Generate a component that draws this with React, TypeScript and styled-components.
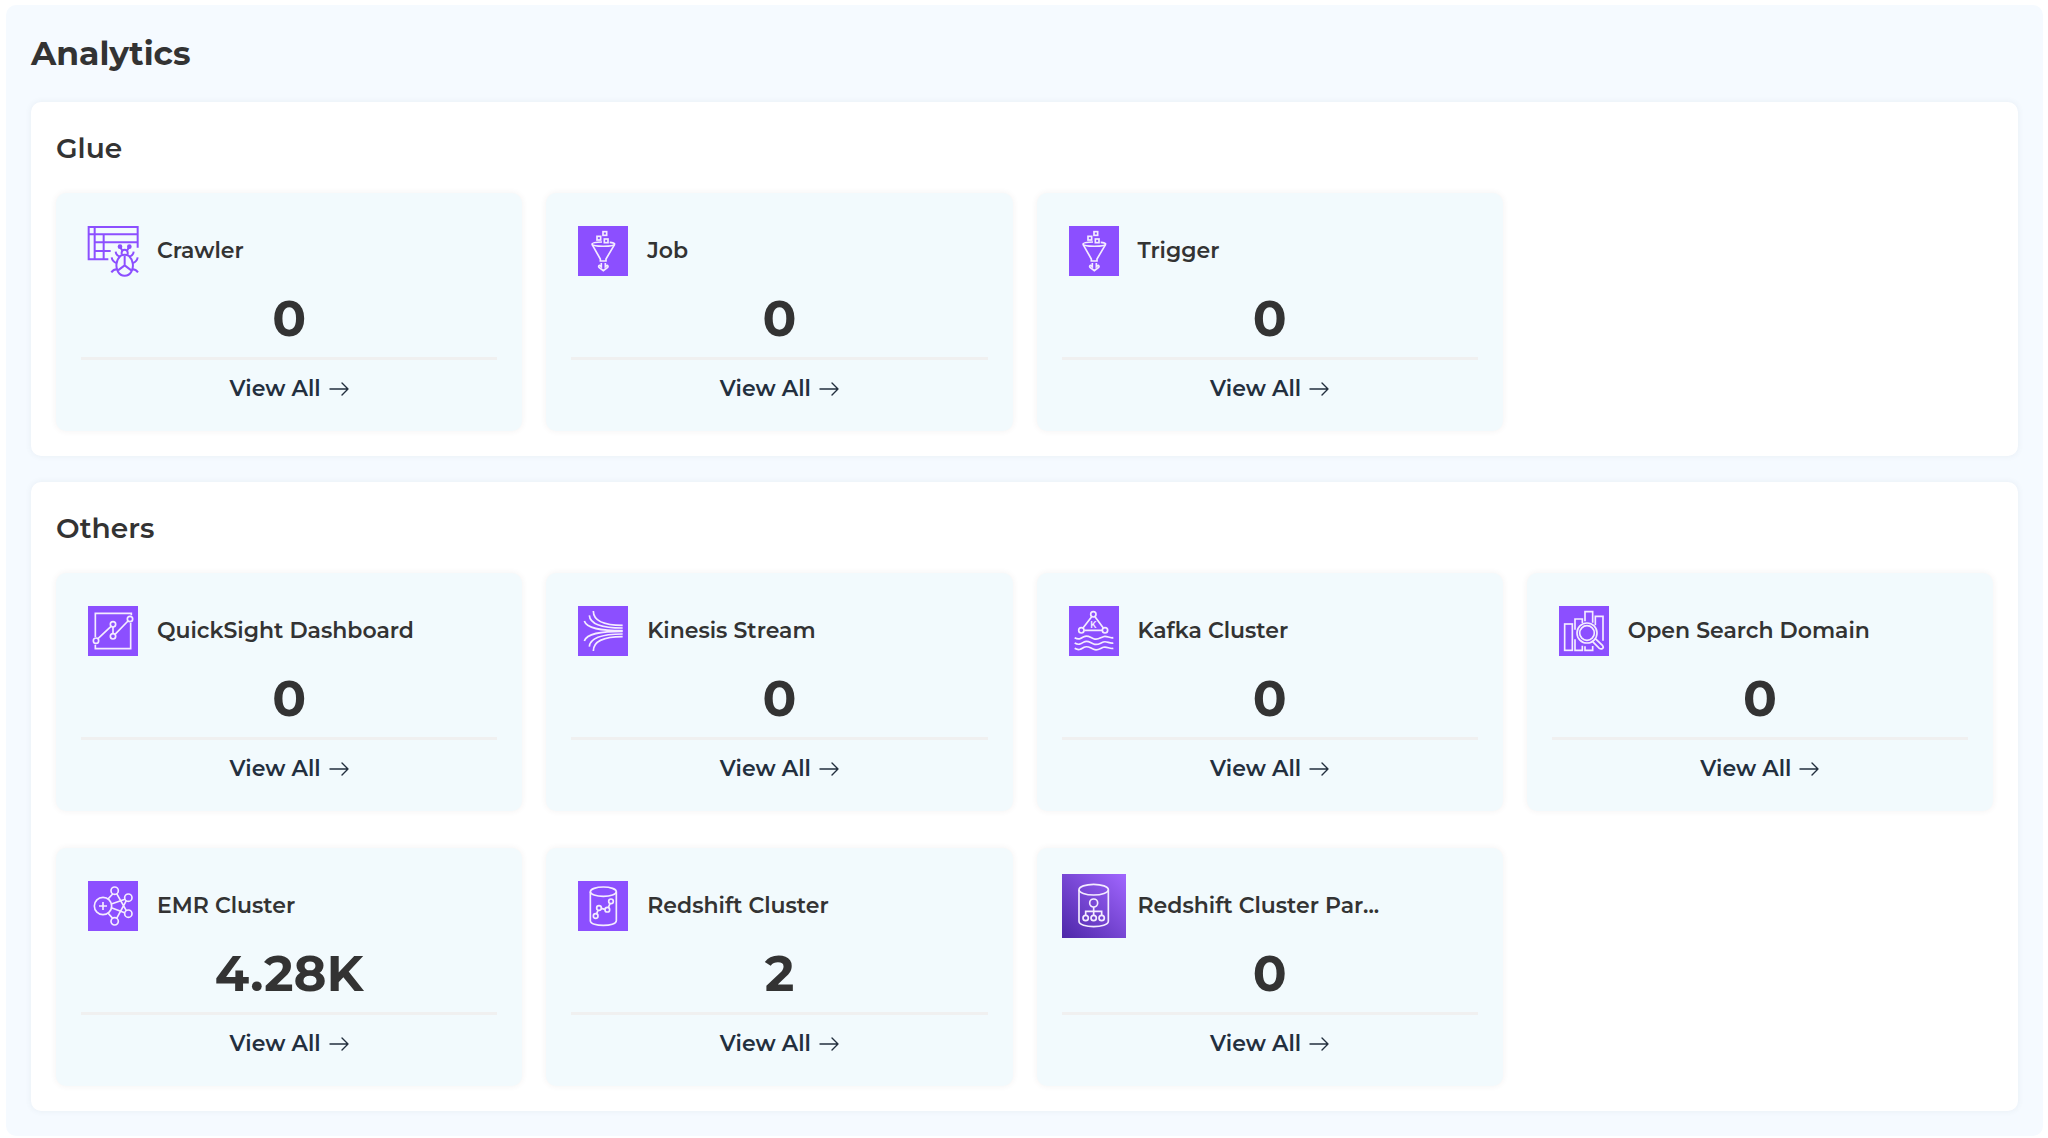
import React from "react";
import styled, { createGlobalStyle } from "styled-components";

const GlobalStyle = createGlobalStyle`
  *, *::before, *::after { box-sizing: border-box; }
  body {
    margin: 0;
    background: #ffffff;
    color: #333333;
    font-family: Montserrat, Inter, "Open Sans", sans-serif;
  }
`;

const Page = styled.main`
  margin: 5px 5px 0 6px;
  padding: 25px;
  border-radius: 10px;
  background: #f5faff;
`;

const PageTitle = styled.h1`
  margin: 0 0 26px;
  font-size: 33px;
  line-height: 46px;
  font-weight: 700;
`;

const Sections = styled.div`
  display: flex;
  flex-direction: column;
  gap: 26px;
`;

const Section = styled.section`
  padding: 25px;
  border-radius: 10px;
  background: #ffffff;
  box-shadow: 0 0 6px rgba(60, 90, 120, 0.08);
`;

const SectionTitle = styled.h2`
  margin: 0 0 24px;
  font-size: 28px;
  line-height: 42px;
  font-weight: 600;
`;

const CardGrid = styled.div`
  display: grid;
  grid-template-columns: repeat(4, minmax(0, 1fr));
  gap: 37px 24px;
`;

const Card = styled.article`
  padding: 26px 25px 13px;
  border-radius: 10px;
  background: #f2fafd;
  box-shadow: 0 0 6px rgba(90, 60, 60, 0.07);
`;

const CardHeader = styled.header`
  display: flex;
  align-items: center;
  gap: 12px;
`;

const CardIcon = styled.svg`
  flex: none;
  width: 64px;
  height: 64px;
  fill: none;
  stroke-width: 5;
`;

const CardTitle = styled.h3`
  margin: 0;
  min-width: 0;
  font-size: 22px;
  line-height: 32px;
  font-weight: 600;
  white-space: nowrap;
`;

const CardValue = styled.p`
  margin: 0;
  padding-bottom: 2px;
  border-bottom: 3px solid #f0f0f0;
  font-size: 50px;
  line-height: 72px;
  font-weight: 700;
  text-align: center;
`;

const CardFooter = styled.footer`
  display: flex;
  justify-content: center;
`;

const ViewAll = styled.a`
  display: flex;
  align-items: center;
  gap: 8px;
  color: #232f3e;
  font-size: 22px;
  line-height: 58px;
  font-weight: 600;
  text-decoration: none;
`;

const Arrow = styled.svg`
  width: 20px;
  height: 14px;
  fill: none;
  stroke: currentColor;
  stroke-width: 1.4;
  stroke-linecap: round;
  stroke-linejoin: round;
`;

/* Service icons share a 150-unit tile with a 21-unit margin around it. */
function Tile({ children }: { children: React.ReactNode }) {
  return (
    <CardIcon viewBox="-21 -21 192 192" stroke="#f4ecff" aria-hidden="true">
      <rect x="0" y="0" width="150" height="150" fill="#8c4fff" stroke="none" />
      {children}
    </CardIcon>
  );
}

const CrawlerIcon = () => (
  <CardIcon viewBox="-21 -21 192 192" stroke="#8c4fff" aria-hidden="true">
    <g strokeWidth="6">
      <path d="M149 65V3H2V100H61" />
      <path d="M2 25H149M20 49H149M20 75H68M20 3V100M47 25V100" />
      <path d="M97 90C84 102 82 124 90 137C99 153 121 153 130 137C138 124 136 102 123 90Q110 82 97 90Z" />
      <path d="M110 89V118M110 118L90 133M110 118L130 133" />
      <path d="M101 86V79Q102 71 110 71Q118 71 119 79V86" />
      <path d="M103 74L97 64M117 74L123 64" />
      <path d="M95 92Q84 88 83 77M125 92Q136 88 137 77M86 111Q73 107 71 94M134 111Q147 107 149 94M89 130Q77 129 70 139M131 130Q143 129 150 139" />
    </g>
    <circle cx="96" cy="62" r="7" fill="#8c4fff" stroke="none" />
    <circle cx="124" cy="62" r="7" fill="#8c4fff" stroke="none" />
  </CardIcon>
);

const GlueIcon = () => (
  <Tile>
    <rect x="75" y="17" width="11" height="11" />
    <rect x="57" y="31" width="11" height="11" />
    <rect x="79" y="39" width="11" height="11" />
    <path d="M72 48Q43 49 42 54C42 63 110 63 110 54Q109 50 95 49" />
    <path d="M42 55L67 99V105H84V99L110 55" />
    <path d="M70 111V122L65 118Q60 120 63 124L76 134L89 124Q92 120 87 118L82 122V111" />
  </Tile>
);

const QuickSightIcon = () => (
  <Tile>
    <path d="M22 93V22H130V28M22 116V128H128V50" />
    <path d="M30 98L69 61M75 63V83M81 85L120 45" />
    <circle cx="24" cy="104" r="8" />
    <circle cx="75" cy="55" r="8" />
    <circle cx="75" cy="91" r="8" />
    <circle cx="126" cy="39" r="8" />
  </Tile>
);

const KinesisIcon = () => (
  <Tile>
    <path d="M46 15C46 44 72 58 134 58M34 28C36 54 68 66 134 66M19 45C26 67 66 74 134 74" />
    <path d="M46 135C46 106 72 92 134 92M34 122C36 96 68 84 134 84M19 105C26 83 66 76 134 76" />
  </Tile>
);

const KafkaIcon = () => (
  <Tile>
    <circle cx="73" cy="25" r="8" />
    <circle cx="37" cy="73" r="8" />
    <circle cx="108" cy="73" r="8" />
    <path d="M68 32L42 66M78 32L103 66M46 73H99" />
    <text
      x="73"
      y="67"
      fill="#f4ecff"
      stroke="none"
      fontFamily="Inter, sans-serif"
      fontSize="27"
      fontWeight="600"
      textAnchor="middle"
    >
      K
    </text>
    {[95, 111, 127].map((y) => (
      <path
        key={y}
        d={`M17 ${y}C29 ${y + 7} 35 ${y + 3} 45 ${y - 3}S62 ${y - 2} 74 ${y + 3}S92 ${y + 1} 103 ${y - 3}S121 ${y + 3} 133 ${y}`}
      />
    ))}
  </Tile>
);

const OpenSearchIcon = () => (
  <Tile>
    <rect x="17" y="54" width="23" height="79" />
    <path d="M48 71V39H70V51M48 100V133H70V119" />
    <path d="M78 46V17H101V50M78 121V133H101V120" />
    <path d="M109 58V31H132V104" />
    <circle cx="84" cy="81" r="30" />
    <circle cx="84" cy="81" r="22" />
    <path d="M109 98L131 119Q135 124 130 128Q125 130 121 127L101 107" />
  </Tile>
);

const EmrIcon = () => (
  <Tile>
    <circle cx="45" cy="75" r="26" />
    <path d="M45 63V87M33 75H57" />
    <circle cx="80" cy="29" r="11" />
    <circle cx="121" cy="50" r="11" />
    <circle cx="121" cy="98" r="11" />
    <circle cx="80" cy="121" r="11" />
    <path d="M60 54L74 39M70 69L111 55M70 80L110 95M60 96L74 112" />
    <path d="M86 38L115 89M86 112L115 59" />
  </Tile>
);

const RedshiftIcon = () => (
  <Tile>
    <ellipse cx="76" cy="32" rx="39" ry="14" />
    <path d="M37 32V119C37 138 115 138 115 119V32" />
    <path d="M56 98L60 88M70 82L81 85M91 80L96 68" />
    <circle cx="53" cy="105" r="7" />
    <circle cx="63" cy="81" r="7" />
    <circle cx="88" cy="86" r="7" />
    <circle cx="99" cy="61" r="7" />
  </Tile>
);

const ParameterIcon = () => (
  <CardIcon viewBox="0 0 192 192" stroke="#f4ecff" aria-hidden="true">
    <defs>
      <linearGradient id="parameter-fill" x1="0" y1="1" x2="1" y2="0">
        <stop offset="0" stopColor="#4d27a8" />
        <stop offset="1" stopColor="#a166ff" />
      </linearGradient>
    </defs>
    <rect width="192" height="192" fill="url(#parameter-fill)" stroke="none" />
    <ellipse cx="95" cy="47" rx="44" ry="16" />
    <path d="M51 47V142C51 163 139 163 139 142V47" />
    <circle cx="95" cy="87" r="12" />
    <path d="M95 99V124M71 124V112H119V124" />
    <circle cx="71" cy="132" r="8" />
    <circle cx="95" cy="132" r="8" />
    <circle cx="119" cy="132" r="8" />
  </CardIcon>
);

type Service = { name: string; count: string; Icon: React.ComponentType };

const groups: { title: string; services: Service[] }[] = [
  {
    title: "Glue",
    services: [
      { name: "Crawler", count: "0", Icon: CrawlerIcon },
      { name: "Job", count: "0", Icon: GlueIcon },
      { name: "Trigger", count: "0", Icon: GlueIcon },
    ],
  },
  {
    title: "Others",
    services: [
      { name: "QuickSight Dashboard", count: "0", Icon: QuickSightIcon },
      { name: "Kinesis Stream", count: "0", Icon: KinesisIcon },
      { name: "Kafka Cluster", count: "0", Icon: KafkaIcon },
      { name: "Open Search Domain", count: "0", Icon: OpenSearchIcon },
      { name: "EMR Cluster", count: "4.28K", Icon: EmrIcon },
      { name: "Redshift Cluster", count: "2", Icon: RedshiftIcon },
      { name: "Redshift Cluster Par...", count: "0", Icon: ParameterIcon },
    ],
  },
];

function ServiceCard({ name, count, Icon }: Service) {
  return (
    <Card>
      <CardHeader>
        <Icon />
        <CardTitle>{name}</CardTitle>
      </CardHeader>
      <CardValue>{count}</CardValue>
      <CardFooter>
        <ViewAll href="#">
          View All
          <Arrow viewBox="0 0 20 14" aria-hidden="true">
            <path d="M1 7H19M13 1L19 7L13 13" />
          </Arrow>
        </ViewAll>
      </CardFooter>
    </Card>
  );
}

export default function App() {
  return (
    <>
      <GlobalStyle />
      <Page>
        <PageTitle>Analytics</PageTitle>
        <Sections>
          {groups.map((group) => (
            <Section key={group.title}>
              <SectionTitle>{group.title}</SectionTitle>
              <CardGrid>
                {group.services.map((service) => (
                  <ServiceCard key={service.name} {...service} />
                ))}
              </CardGrid>
            </Section>
          ))}
        </Sections>
      </Page>
    </>
  );
}
